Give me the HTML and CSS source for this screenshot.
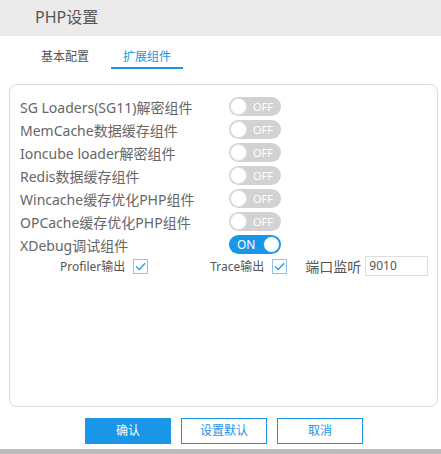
FILE: index.html
```html
<!DOCTYPE html>
<html lang="zh-CN">
<head>
<meta charset="utf-8">
<title>PHP设置</title>
<link rel="stylesheet" href="styles.css">
</head>
<body>
<div class="dialog">
  <div class="header">PHP设置</div>
  <div class="tabs">
    <div class="tab">基本配置</div>
    <div class="tab active">扩展组件</div>
  </div>
  <div class="panel">
    <div class="row"><span class="label">SG Loaders(SG11)解密组件</span><span class="switch"><span class="knob"></span><span class="state">OFF</span></span></div>
    <div class="row"><span class="label">MemCache数据缓存组件</span><span class="switch"><span class="knob"></span><span class="state">OFF</span></span></div>
    <div class="row"><span class="label">Ioncube loader解密组件</span><span class="switch"><span class="knob"></span><span class="state">OFF</span></span></div>
    <div class="row"><span class="label">Redis数据缓存组件</span><span class="switch"><span class="knob"></span><span class="state">OFF</span></span></div>
    <div class="row"><span class="label">Wincache缓存优化PHP组件</span><span class="switch"><span class="knob"></span><span class="state">OFF</span></span></div>
    <div class="row"><span class="label">OPCache缓存优化PHP组件</span><span class="switch"><span class="knob"></span><span class="state">OFF</span></span></div>
    <div class="row"><span class="label">XDebug调试组件</span><span class="switch on"><span class="state">ON</span><span class="knob"></span></span></div>
    <div class="subrow">
      <span class="sublabel profiler">Profiler输出</span>
      <span class="check"><svg width="13" height="13" viewBox="0 0 13 13"><path d="M2 6.5 L5.2 9.6 L11 3.2" fill="none" stroke="#1a96e8" stroke-width="1.3"/></svg></span>
      <span class="sublabel trace">Trace输出</span>
      <span class="check"><svg width="13" height="13" viewBox="0 0 13 13"><path d="M2 6.5 L5.2 9.6 L11 3.2" fill="none" stroke="#1a96e8" stroke-width="1.3"/></svg></span>
      <span class="portlabel">端口监听</span>
      <span class="port">9010</span>
    </div>
  </div>
  <div class="buttons">
    <div class="btn primary">确认</div>
    <div class="btn">设置默认</div>
    <div class="btn">取消</div>
  </div>
  <div class="bottombar"></div>
</div>
</body>
</html>
```
FILE: styles.css
```css
html, body {
  margin: 0;
  padding: 0;
  background: #fff;
}
body {
  font-family: "Noto Sans", "Noto Sans CJK SC", sans-serif;
  color: #555;
}
.dialog {
  width: 441px;
  height: 454px;
  display: flex;
  flex-direction: column;
}
.header {
  height: 36px;
  line-height: 34px;
  background: #ebebeb;
  padding-left: 35px;
  font-size: 16px;
  color: #555;
}
.tabs {
  display: flex;
  gap: 10px;
  padding-left: 29px;
  height: 33px;
}
.tab {
  width: 72px;
  text-align: center;
  font-size: 12px;
  line-height: 18px;
  padding-top: 12px;
  height: 19px;
  color: #555;
  border-bottom: 2px solid transparent;
}
.tab.active {
  color: #1a96e8;
  border-bottom-color: #1a96e8;
}
.panel {
  margin: 15px 3px 0 9px;
  height: 323px;
  box-sizing: border-box;
  border: 1px solid #dcdcdc;
  border-radius: 8px;
  padding: 10px 0 0 10px;
}
.row {
  display: flex;
  align-items: center;
  height: 23px;
}
.label {
  width: 209px;
  font-size: 14px;
  color: #666;
  white-space: nowrap;
}
.switch {
  width: 52px;
  height: 19px;
  border-radius: 10px;
  background: #d2d2d2;
  display: flex;
  align-items: center;
  justify-content: space-between;
  padding: 0 1px;
  box-sizing: border-box;
}
.knob {
  width: 17px;
  height: 17px;
  border-radius: 50%;
  background: #fff;
  box-sizing: border-box;
  border: 1px solid #e0e0e0;
}
.state {
  font-size: 11px;
  color: #fff;
  padding-right: 7px;
  line-height: 19px;
}
.switch.on {
  background: #1a96e8;
}
.switch.on .knob {
  border-color: #1a96e8;
}
.switch.on .state {
  padding-right: 0;
  padding-left: 7px;
  font-size: 12px;
}
.subrow {
  display: flex;
  align-items: center;
  height: 20px;
  margin-top: 0;
}
.sublabel {
  font-size: 12px;
  color: #555;
  white-space: nowrap;
}
.profiler {
  margin-left: 40px;
}
.trace {
  margin-left: 62px;
}
.check {
  width: 15px;
  height: 15px;
  box-sizing: border-box;
  border: 1px solid #8cc6ef;
  margin-left: 8px;
  display: flex;
  align-items: center;
  justify-content: center;
}
.portlabel {
  font-size: 14px;
  color: #555;
  margin-left: 18px;
  white-space: nowrap;
}
.port {
  margin-left: 4px;
  width: 63px;
  height: 20px;
  box-sizing: border-box;
  border: 1px solid #ddd;
  font-size: 12px;
  line-height: 18px;
  padding-left: 3px;
  color: #555;
}
.buttons {
  display: flex;
  gap: 10px;
  padding-left: 85px;
  margin-top: 11px;
  height: 26px;
}
.btn {
  width: 86px;
  height: 26px;
  box-sizing: border-box;
  border: 1px solid #1a96e8;
  color: #1a96e8;
  font-size: 12px;
  line-height: 24px;
  text-align: center;
}
.btn.primary {
  background: #1a96e8;
  color: #fff;
}
.bottombar {
  margin-top: 5px;
  height: 5px;
  background: #bbbbbb;
}
```
